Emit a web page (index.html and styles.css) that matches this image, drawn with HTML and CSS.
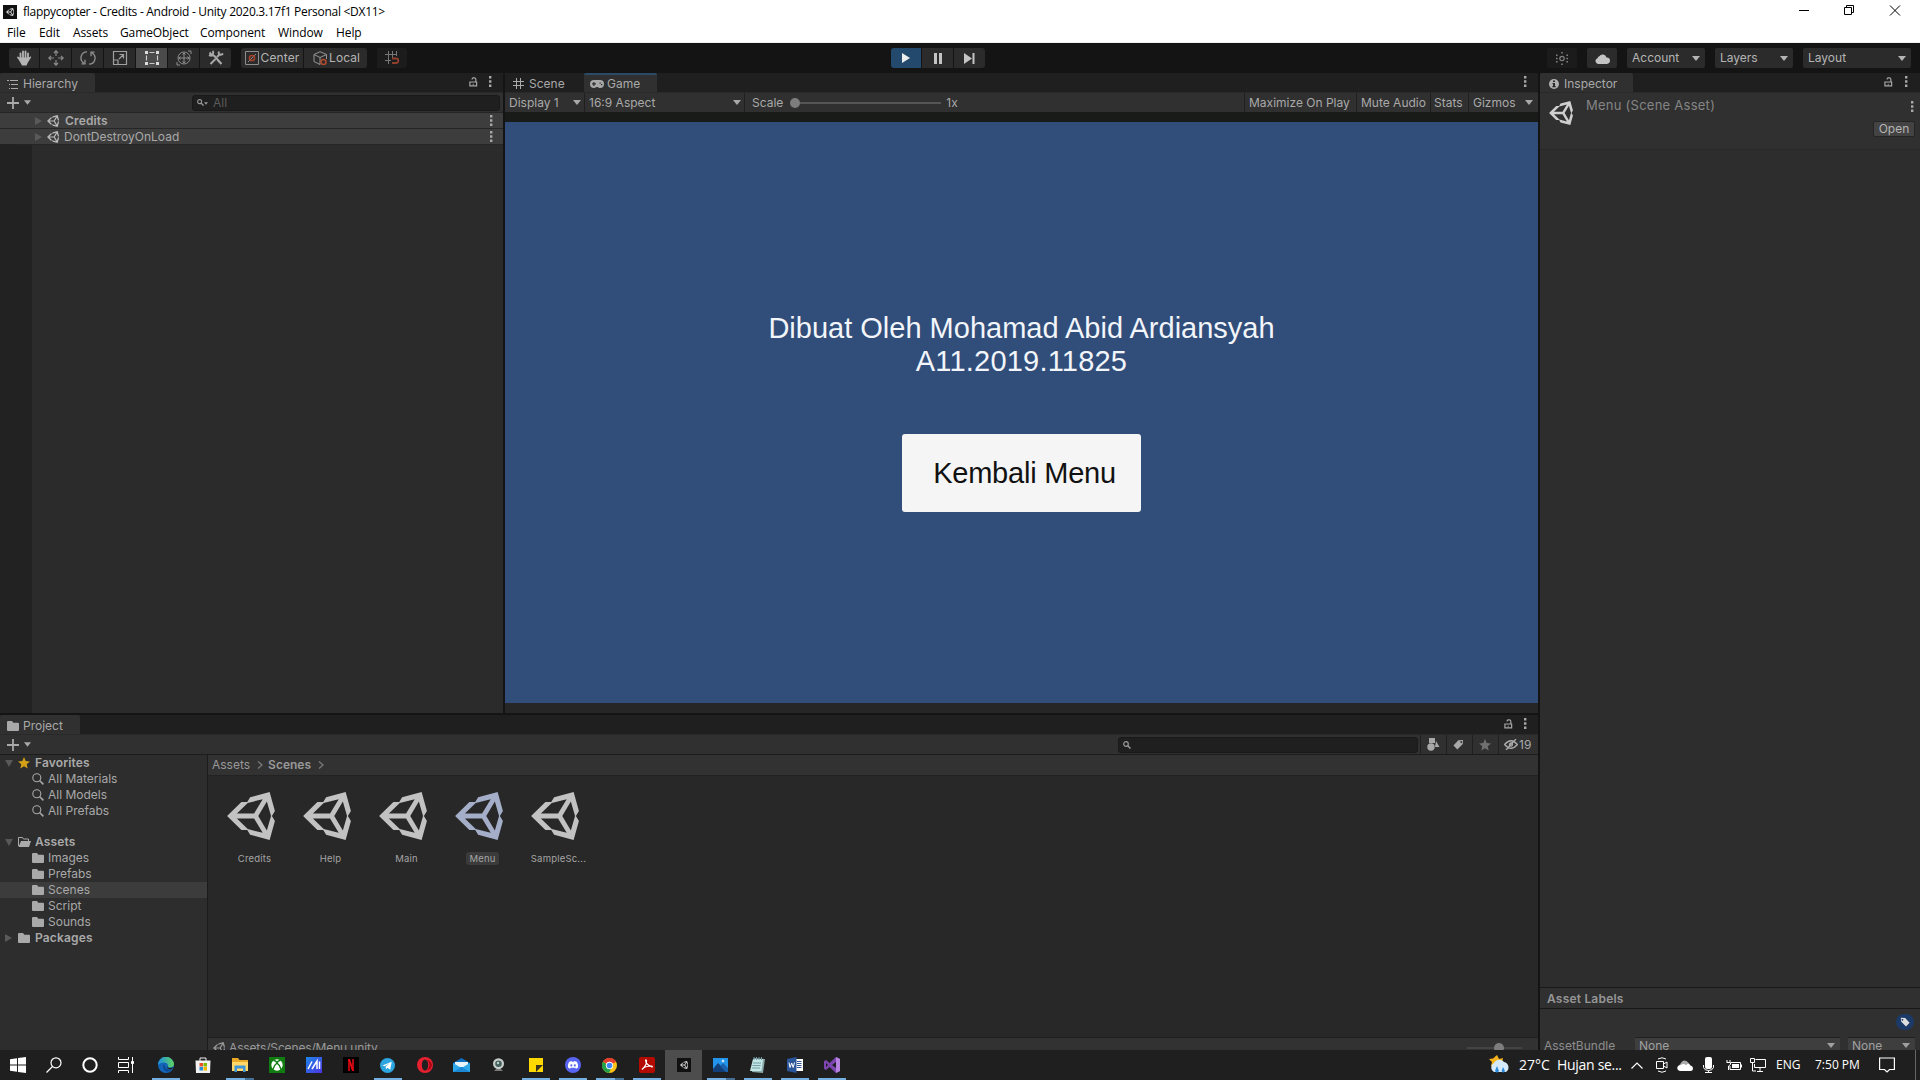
FILE: index.html
```html
<!DOCTYPE html>
<html lang="en">
<head>
<meta charset="utf-8">
<title>flappycopter - Credits - Android - Unity</title>
<link rel="stylesheet" href="styles.css">
</head>
<body>
<svg class="defs" aria-hidden="true">
  <symbol id="unity" viewBox="15 14 484 484"><path fill="currentColor" d="M498 206 445 15 248 66l-29 50-59 0L16 256l144 140h59l29 50 197 51 53-191-30-50zM224 124l151-37-87 145H115zm0 264L115 280h173l87 146zm193 14-87-146 87-146 42 146z"/></symbol>
  <symbol id="lock" viewBox="0 0 10 11"><path fill="none" stroke="currentColor" stroke-width="1.3" d="M1 5.5h7.5v4.300H1zM7.600 5.500V2.600Q7.600 1 6 1H4.800Q3.400 1 3.400 2.600M4.700 7.500v1"/></symbol>
  <symbol id="kebab" viewBox="0 0 4 12"><path fill="currentColor" d="M1 0h2.400v2.400H1zM1 4.300h2.400v2.400H1zM1 8.600h2.400V11H1z"/></symbol>
  <symbol id="tri" viewBox="0 0 8 5"><path fill="currentColor" d="M0 0h8L4 5z"/></symbol>
  <symbol id="plus" viewBox="0 0 12 12"><path stroke="currentColor" stroke-width="1.800" d="M6 0v12M0 6h12"/></symbol>
  <symbol id="folder" viewBox="0 0 12 10"><path fill="currentColor" d="M0 1.200Q0 0 1 0h4l1.300 1.800H11q1 0 1 1V9q0 1-1 1H1Q0 10 0 9z"/></symbol>
  <symbol id="search" viewBox="0 0 12 12"><circle cx="4.800" cy="4.800" r="4" fill="none" stroke="currentColor" stroke-width="1.100"/><path stroke="currentColor" stroke-width="1.600" d="m7.800 7.800 3.600 3.600"/></symbol>
  <symbol id="find" viewBox="0 0 8 8"><circle cx="3" cy="3" r="2.300" fill="none" stroke="currentColor" stroke-width="1.200"/><path stroke="currentColor" stroke-width="1.500" d="m4.700 4.700 2.800 2.800"/></symbol>
  <symbol id="chev" viewBox="0 0 6 8"><path fill="none" stroke="currentColor" stroke-width="1.400" d="m1 .5 4 3.500-4 3.500"/></symbol>
  <symbol id="star" viewBox="0 0 12 12"><path fill="currentColor" d="m6 0 1.700 4 4.300.4-3.300 2.800 1 4.300L6 9.200l-3.700 2.300 1-4.300L0 4.400 4.300 4z"/></symbol>
  <symbol id="tag" viewBox="0 0 12 12"><path fill="currentColor" fill-rule="evenodd" d="M5.800 1.300 11 1l-.3 4.500L4.800 11.500.5 7zM9 2.300a1 1 0 1 0 .1 0z"/></symbol>
</svg>

<header class="window">
  <div class="title">
    <span class="appicon"><svg width="8" height="8"><use href="#unity"/></svg></span>
    <span class="caption">flappycopter - Credits - Android - Unity 2020.3.17f1 Personal &lt;DX11&gt;</span>
    <svg class="winbtns" width="104" height="14" fill="none" stroke="#000"><path d="M1 7.500h10M46.500 4.500h7v7h-7zM48.500 4.500v-2h7v7h-2M92 2.500l10 10M102 2.500l-10 10"/></svg>
  </div>
  <nav class="menu"><span>File</span><span>Edit</span><span>Assets</span><span>GameObject</span><span>Component</span><span>Window</span><span>Help</span></nav>
</header>

<div class="toolbar">
  <div class="tools main">
    <b><svg width="16" height="16" viewBox="0 0 16 16"><path d="M4.500 9V3.300M7 8V1.500M9.500 8V1.500M12 9V3.300M2 7.500l3.300 4" stroke="#b5b5b5" stroke-width="1.800" stroke-linecap="round"/><path fill="#b5b5b5" d="M3.700 7.500h9.200l1.600-1.200.7 1-3.200 5-1.500 3.200H6L3 10z"/></svg></b>
    <b><svg width="16" height="16" viewBox="0 0 16 16" fill="none" stroke="#8a8a8a" stroke-width="1.200"><path d="M8 1v5M8 10v5M1 8h5M10 8h5M6 3l2-2.200L10 3M6 13l2 2.200 2-2.200M3 6 .8 8 3 10M13 6l2.200 2-2.200 2"/></svg></b>
    <b><svg width="16" height="16" viewBox="0 0 16 16" fill="none" stroke="#8f8f8f" stroke-width="1.300"><path d="M7 1.800A6 6 0 0 0 4 13M1.500 13.800H5v-4M9 14.200A6 6 0 0 0 12 3M14.500 2.200H11v4"/></svg></b>
    <b><svg width="16" height="16" viewBox="0 0 16 16" fill="none" stroke="#a0a0a0" stroke-width="1.200"><path d="M1.500 1.500h13v13h-13zM1.500 10h4.500v4.500M7 9l4.500-4.500M7.500 4.500h4v4"/></svg></b>
    <b class="on"><svg width="16" height="16" viewBox="0 0 16 16" fill="#ddd"><path d="M1 1h3v3H1zM12 1h3v3h-3zM1 12h3v3H1zM12 12h3v3h-3z"/><path stroke="#ccc" stroke-width="1.200" d="M5.500 2.500h5M5.500 13.500h5M2.500 5.500v5M13.500 5.500v5"/></svg></b>
    <b><svg width="16" height="16" viewBox="0 0 16 16" fill="none" stroke="#909090"><circle cx="8" cy="8" r="6"/><path d="M8 3v10M3 8h10M6.500 4.500 8 3l1.500 1.500M6.500 11.500 8 13l1.500-1.500M4.500 6.500 3 8l1.500 1.500M11.500 6.500 13 8l-1.500 1.500M12 1h3v3M1 12v3h3"/></svg></b>
    <b><svg width="16" height="16" viewBox="0 0 16 16" fill="none" stroke="#a8a8a8" stroke-width="2"><path d="m2.500 14 5-5M9 7l3-3M1.500 2.500 4 5l2.500 1L13.500 14M1 5q3 1.500 4-.5T4.500 1M11 1.500Q10 4 12 4.500t3-1M9.500 10l4 4"/></svg></b>
  </div>
  <div class="tools pivot">
    <b class="w62"><svg width="14" height="14" viewBox="0 0 14 14" fill="none" stroke="#8d8d8d"><path d="M.5.500h13v13H.5zM3 11l8-8"/><circle cx="7" cy="7" r="2.600" stroke="#a8432c" stroke-width="1.500"/></svg><span>Center</span></b>
    <b class="w63"><svg width="15" height="15" viewBox="0 0 15 15" fill="none" stroke="#969696"><path d="M7 .7 1 3.500v7l6 3M7 .7l6.500 2.800V8M1 3.500l6 3 6.500-3M7 6.500v7"/><circle cx="10.500" cy="11" r="2.500" stroke="#b04a2c" stroke-width="1.500"/></svg><span>Local</span></b>
  </div>
  <div class="tools snap"><b><svg width="15" height="14" viewBox="0 0 15 14" fill="none" stroke="#777"><path d="M0 3.500h12M0 9.500h6M3.500 0v13M7.500 0v7M11.500 0v5"/><path stroke="#8f3f2b" stroke-width="1.800" d="M7 7.500h4q2.300 0 2.300 2.200T11 12H7"/></svg></b></div>
  <div class="tools play">
    <b class="go"><svg width="8" height="12"><path fill="#eee" d="M0 1l8 5-8 5z"/></svg></b>
    <b><svg width="8" height="11"><path fill="#c4c4c4" d="M0 0h3v11H0zM5 0h3v11H5z"/></svg></b>
    <b><svg width="11" height="11"><path fill="#c4c4c4" d="M0 0l8 5.500L0 11zM8.500 0h2v11h-2z"/></svg></b>
  </div>
  <div class="tools right">
    <b class="dim"><svg width="14" height="13" viewBox="0 0 14 13" fill="none" stroke="#808080" stroke-width="1.200"><circle cx="7" cy="6.500" r="2.200"/><path stroke="none" fill="#808080" d="M6.200 0h1.600v1.600H6.200zM6.200 11.400h1.600V13H6.200zM1 2.500h1.600v1.600H1zM11.400 2.500H13v1.600h-1.600zM1 9h1.600v1.600H1zM11.400 9H13v1.600h-1.600zM1 5.700h1.600v1.600H1zM11.400 5.700H13v1.600h-1.600z"/></svg></b>
    <b><svg width="15" height="11" viewBox="0 0 15 11"><path fill="#c4c4c4" d="M3 11a3 3 0 0 1-.5-5.800 2.600 2.600 0 0 1 1.800-2A4 4 0 0 1 11.500 4.500 3.200 3.200 0 0 1 12 11z"/></svg></b>
    <b class="dd"><span>Account</span><svg width="8" height="5"><use href="#tri"/></svg></b>
    <b class="dd"><span>Layers</span><svg width="8" height="5"><use href="#tri"/></svg></b>
    <b class="dd wide"><span>Layout</span><svg width="8" height="5"><use href="#tri"/></svg></b>
  </div>
</div>

<main class="editor">
  <div class="left">
    <div class="upper">
      <section class="hierarchy">
        <div class="tabs"><div class="tab th"><svg width="11" height="10" viewBox="0 0 11 10" stroke="#aaa"><path d="M0 1.500h2M3 1.500h8M2 5.500h1M4 5.500h7M2 9.500h1M4 9.500h7"/></svg><span>Hierarchy</span></div>
          <div class="tabend"><svg width="9" height="10"><use href="#lock"/></svg><svg width="4" height="12"><use href="#kebab"/></svg></div></div>
        <div class="bar"><svg class="plus" width="12" height="12"><use href="#plus"/></svg><svg width="7" height="5"><use href="#tri"/></svg>
          <div class="field hsearch"><svg width="7" height="7"><use href="#find"/></svg><svg class="mini" width="4" height="3"><use href="#tri"/></svg><span>All</span></div></div>
        <div class="hrow"><i class="rt"></i><svg class="u" width="12" height="12"><use href="#unity"/></svg><strong>Credits</strong><svg class="k" width="4" height="12"><use href="#kebab"/></svg></div>
        <div class="hrow second"><i class="rt"></i><svg class="u" width="12" height="12"><use href="#unity"/></svg><span>DontDestroyOnLoad</span><svg class="k" width="4" height="12"><use href="#kebab"/></svg></div>
        <div class="hbody"></div>
      </section>
      <section class="game">
        <div class="tabs"><div class="tab ts"><svg width="11" height="11" viewBox="0 0 11 11" stroke="#aaa"><path d="M3.500 0v11M7.500 0v11M0 3.500h11M0 7.500h11"/></svg><span>Scene</span></div>
          <div class="tab tg"><svg width="14" height="8" viewBox="0 0 14 8"><path fill="#a9a9a9" fill-rule="evenodd" d="M4 0h6a4 4 0 0 1 0 8Q8.500 8 7.700 7H6.300Q5.500 8 4 8a4 4 0 0 1 0-8zM3.300 2v1.300H2v1.200h1.300V6h1.200V4.500H6V3.300H4.500V2zM9.500 2.500h1.300v1.300H9.500zM11 4h1.300v1.300H11z"/></svg><span>Game</span></div>
          <div class="tabend"><svg width="4" height="12"><use href="#kebab"/></svg></div></div>
        <div class="bar gbar">
          <div class="cell c1"><span>Display 1</span><svg width="8" height="5"><use href="#tri"/></svg></div>
          <div class="cell c2"><span>16:9 Aspect</span><svg width="8" height="5"><use href="#tri"/></svg></div>
          <div class="cell c3"><span>Scale</span><div class="slider"><i></i></div><span>1x</span></div>
          <div class="cell c4">Maximize On Play</div><div class="cell c5">Mute Audio</div><div class="cell c6">Stats</div><div class="cell c7"><span>Gizmos</span><svg width="8" height="5"><use href="#tri"/></svg></div>
        </div>
        <div class="view">
          <p>Dibuat Oleh Mohamad Abid Ardiansyah<br><span class="nim">A11.2019.11825</span></p>
          <button>Kembali Menu</button>
        </div>
      </section>
    </div>
    <section class="project">
      <div class="tabs"><div class="tab tp"><svg width="12" height="10"><use href="#folder"/></svg><span>Project</span></div>
        <div class="tabend"><svg width="9" height="10"><use href="#lock"/></svg><svg width="4" height="12"><use href="#kebab"/></svg></div></div>
      <div class="bar"><svg class="plus" width="12" height="12"><use href="#plus"/></svg><svg width="7" height="5"><use href="#tri"/></svg>
        <div class="field psearch"><svg width="8" height="8"><use href="#find"/></svg></div>
        <div class="pb"><svg width="13" height="13" viewBox="0 0 13 13" fill="#a8a8a8"><path d="M2 0h6v5H2zM9 3l3.500 6H8z"/><circle cx="4" cy="9" r="3.700"/></svg></div>
        <div class="pb"><svg width="11" height="11"><use href="#tag"/></svg></div>
        <div class="pb st"><svg width="12" height="12"><use href="#star"/></svg></div>
        <div class="pb last"><svg width="14" height="11" viewBox="0 0 14 11" fill="none" stroke="#a8a8a8" stroke-width="1.300"><path d="M.6 5.500Q7-2 13.400 5.500 7 13 .6 5.500zM2 11 12 0M4.500 8 9.500 2.500"/><circle cx="7" cy="5.500" r="1.500"/></svg><span>19</span></div>
      </div>
      <div class="pbody">
        <div class="tree">
          <div class="row"><i class="dt"></i><svg class="fav" width="12" height="12"><use href="#star"/></svg><strong>Favorites</strong></div>
          <div class="row sub"><svg width="12" height="12"><use href="#search"/></svg><span>All Materials</span></div>
          <div class="row sub"><svg width="12" height="12"><use href="#search"/></svg><span>All Models</span></div>
          <div class="row sub"><svg width="12" height="12"><use href="#search"/></svg><span>All Prefabs</span></div>
          <div class="row gap"><i class="dt"></i><svg class="open" width="13" height="10" viewBox="0 0 13 10"><path fill="none" stroke="#aaa" d="M.5 9V.500h4l1 1.500h5v2"/><path fill="#aaa" d="M3 4h10l-2 6H.5z"/></svg><strong>Assets</strong></div>
          <div class="row sub"><svg width="12" height="10"><use href="#folder"/></svg><span>Images</span></div>
          <div class="row sub"><svg width="12" height="10"><use href="#folder"/></svg><span>Prefabs</span></div>
          <div class="row sub sel"><svg width="12" height="10"><use href="#folder"/></svg><span>Scenes</span></div>
          <div class="row sub"><svg width="12" height="10"><use href="#folder"/></svg><span>Script</span></div>
          <div class="row sub"><svg width="12" height="10"><use href="#folder"/></svg><span>Sounds</span></div>
          <div class="row"><i class="rt"></i><svg width="12" height="10"><use href="#folder"/></svg><strong>Packages</strong></div>
        </div>
        <div class="files">
          <div class="crumbs"><span>Assets</span><svg width="6" height="8"><use href="#chev"/></svg><strong>Scenes</strong><svg width="6" height="8"><use href="#chev"/></svg></div>
          <div class="grid">
            <div class="file"><svg width="48" height="48"><use href="#unity"/></svg><span>Credits</span></div>
            <div class="file"><svg width="48" height="48"><use href="#unity"/></svg><span>Help</span></div>
            <div class="file"><svg width="48" height="48"><use href="#unity"/></svg><span>Main</span></div>
            <div class="file picked"><svg width="48" height="48"><use href="#unity"/></svg><span>Menu</span></div>
            <div class="file"><svg width="48" height="48"><use href="#unity"/></svg><span>SampleSc...</span></div>
          </div>
          <div class="path"><svg width="12" height="12"><use href="#unity"/></svg><span>Assets/Scenes/Menu.unity</span><div class="zoomer"><i></i></div></div>
        </div>
      </div>
    </section>
  </div>
  <aside class="inspector">
    <div class="tabs"><div class="tab ti"><svg width="10" height="10" viewBox="0 0 10 10"><circle cx="5" cy="5" r="5" fill="#b0b0b0"/><path fill="#2b2b2b" d="M4 1.500h2v1.600H4zM3.500 4H6v3h.7v1.200H3.400V7H4V5h-.5z"/></svg><span>Inspector</span></div>
      <div class="tabend"><svg width="9" height="10"><use href="#lock"/></svg><svg width="4" height="12"><use href="#kebab"/></svg></div></div>
    <div class="ihead"><svg class="iu" width="24" height="24"><use href="#unity"/></svg><span class="iname">Menu (Scene Asset)</span><div class="iside"><svg width="4" height="12"><use href="#kebab"/></svg><button>Open</button></div></div>
    <div class="ibody"></div>
    <div class="labels">Asset Labels</div>
    <div class="tagrow"><i><svg width="10" height="10"><use href="#tag"/></svg></i></div>
    <div class="bundle"><span>AssetBundle</span><div class="sel1">None<svg width="8" height="5"><use href="#tri"/></svg></div><div class="sel2">None<svg width="8" height="5"><use href="#tri"/></svg></div></div>
  </aside>
</main>

<footer class="taskbar">
  <div class="t n"><svg width="16" height="16" viewBox="0 0 16 16"><path fill="#fff" d="M0 2.200 7 1.200v6.300H0zM8 1l8-1v7.500H8zM0 8.500h7v6.300l-7-1zM8 8.500h8V16l-8-1.100z"/></svg></div>
  <div class="t n"><svg width="16" height="16" viewBox="0 0 16 16" fill="none" stroke="#fff" stroke-width="1.200"><circle cx="10" cy="5.800" r="5"/><path d="M6.500 9.500.5 15.500"/></svg></div>
  <div class="t n"><svg width="16" height="16" viewBox="0 0 16 16"><circle cx="8" cy="8" r="6.700" fill="none" stroke="#fff" stroke-width="2"/></svg></div>
  <div class="t tv"><svg width="16" height="16" viewBox="0 0 16 16" fill="none" stroke="#fff"><path d="M.5 0v2.500h10V0M.5 5.500h10v5H.5zM.5 16v-2.500h10V16M14.500 0v16"/><path fill="#fff" d="M13.500 4.500h2v2h-2z"/></svg></div>
  <div class="t on"><svg width="16" height="16" viewBox="0 0 16 16"><defs><linearGradient id="eg"><stop stop-color="#1b8fe0"/><stop offset="1" stop-color="#5fd35f"/></linearGradient></defs><circle cx="8" cy="8" r="8" fill="#1465b8"/><path fill="url(#eg)" d="M0 8a8 8 0 0 1 16-.5Q15.500 11 11 10.500 9.500 10 10 8.500 10 6 6.500 5.500 2 5 0 8z"/><path fill="#0c4590" d="M6 7q-2 3 1 6.500 3 2 6-.5-5 0-6-3z"/><path fill="#202020" d="M9.800 8.500q-1 2 2 2.500 2.500 0 3.500-1-1 2.500-3 2.600Q8 12 9.800 8.500z"/></svg></div>
  <div class="t"><svg width="16" height="16" viewBox="0 0 16 16"><path fill="none" stroke="#eee" d="M5 4V1h6v3"/><path fill="#f2f2f2" d="M.5 3.500h15L15 16H1z"/><path fill="#e8512e" d="M4.500 6H8v3.500H4.500z"/><path fill="#7fba00" d="M8.500 6H12v3.500H8.500z"/><path fill="#2a8fd8" d="M4.500 10H8v3.500H4.500z"/><path fill="#f5b400" d="M8.500 10H12v3.500H8.500z"/></svg></div>
  <div class="t on two"><svg width="16" height="16" viewBox="0 0 16 16"><path fill="#e9a825" d="M0 1h6l1.500 2H16v11H0z"/><path fill="#ffd869" d="M0 5h16v9H0z"/><path fill="#3e95d8" d="M2.500 15V8.500h11V15H11v-3.500H5V15z"/></svg></div>
  <div class="t"><svg width="16" height="16" viewBox="0 0 16 16"><path fill="#107c10" d="M0 0h16v16H0z"/><circle cx="8" cy="8" r="5.700" fill="#fff"/><path fill="none" stroke="#107c10" stroke-width="1.500" d="M4 12.500Q5 8 8 6q3 2 4 6.500M4.500 3.300Q7 4 8 5.700 9 4 11.500 3.300"/></svg></div>
  <div class="t"><svg width="16" height="16" viewBox="0 0 16 16"><defs><linearGradient id="mg" x2="1" y2="1"><stop stop-color="#1c86e8"/><stop offset="1" stop-color="#4c35e0"/></linearGradient></defs><path fill="url(#mg)" d="M0 0h16v16H0z"/><path fill="none" stroke="#fff" stroke-width="1.500" d="M2 12 6 4.500M6 12l5-8v8M13.500 4.500V12"/></svg></div>
  <div class="t"><svg width="16" height="16" viewBox="0 0 16 16"><path d="M0 0h16v16H0z"/><path fill="#b20710" d="M5 2h2v12H5zM9 2h2v12H9z"/><path fill="#e50914" d="M5 2h2l4 12H9z"/></svg></div>
  <div class="t on"><svg width="15" height="15" viewBox="0 0 16 16"><circle cx="8" cy="8" r="8" fill="#2ca5e0"/><path fill="#fff" d="m2.500 8 10-4-1.600 8.500-3-2-1.500 1.500-.4-2.800 4-3.700-5 3.300z"/></svg></div>
  <div class="t"><svg width="16" height="16" viewBox="0 0 16 16"><ellipse cx="8" cy="8" rx="8" ry="8" fill="#e8202f"/><ellipse cx="8" cy="8" rx="3.200" ry="5.500" fill="#202020"/><path fill="#a70014" d="M10 2.500q5 5 0 11 4-1 5-5.500-.7-4-5-5.500z"/></svg></div>
  <div class="t"><svg width="17" height="14" viewBox="0 0 17 14"><path fill="#0f6fc0" d="M0 5 8.500 0 17 5v9H0z"/><path fill="#e8f4fc" d="M2 4h13v5H2z"/><path fill="#2ba7ea" d="m0 5 8.500 5L17 5v9H0z"/><path fill="#1b88d6" d="m0 14 8.500-5 8.500 5z"/></svg></div>
  <div class="t"><svg width="13" height="14" viewBox="0 0 13 14"><path fill="#777" d="m2 13 3-3h3l3 3z"/><circle cx="6.500" cy="5.700" r="5.500" fill="#c9cfcd"/><circle cx="6.500" cy="5.700" r="3.300" fill="#48605d"/><circle cx="6" cy="5" r="1.200" fill="#b7d3ce"/></svg></div>
  <div class="t on"><svg width="14" height="14"><path fill="#ffd800" d="M0 0h14v14H0z"/><path fill="#3a3320" d="M7 14V7h7z"/></svg></div>
  <div class="t on"><svg width="16" height="16" viewBox="0 0 16 16"><circle cx="8" cy="8" r="8" fill="#5865f2"/><path fill="#fff" fill-rule="evenodd" d="m4 5 2.500-1 .5.700h2l.5-.7L12 5q1.300 2.500 1 5.500l-2 1.200-.8-1H5.800l-.8 1-2-1.200Q2.700 7.500 4 5zm2.300 2.200a1 1.200 0 1 0 .1 0zm3.500 0a1 1.200 0 1 0 .1 0z"/></svg></div>
  <div class="t on two"><svg width="15" height="15" viewBox="0 0 16 16"><circle cx="8" cy="8" r="8" fill="#fbc116"/><path fill="#e33b2e" d="M8 8 1 4a8 8 0 0 1 14 0z"/><path fill="#249f4a" d="M1 4a8 8 0 0 0 6.500 12L10 10z"/><circle cx="8" cy="8" r="3.900" fill="#fff"/><circle cx="8" cy="8" r="3" fill="#4285f4"/></svg></div>
  <div class="t on"><svg width="16" height="16" viewBox="0 0 16 16"><rect width="16" height="16" rx="2" fill="#b30b00"/><path fill="none" stroke="#fff" stroke-width="1.200" d="M3 12.500Q8 8 7.500 3.500q-.7-1.500-1 0 .5 4 6.500 6.500 1-1-1-1-6 0-9 3.500"/></svg></div>
  <div class="t active"><span class="uicon"><svg width="8" height="8"><use href="#unity"/></svg></span></div>
  <div class="t on two"><svg width="15" height="14" viewBox="0 0 15 14"><path fill="#2294ea" d="M0 0h15v14H0z"/><path fill="#123f78" d="m0 11 5-6 9 9H0z"/><path fill="#1a62ad" d="m7 8 3-3 5 5v4h-2z"/><path fill="#fff" d="m10 1 .6 1.400L12 3l-1.400.6L10 5l-.6-1.400L8 3l1.400-.6z"/></svg></div>
  <div class="t on"><svg width="15" height="16" viewBox="0 0 15 16"><path fill="#8ba9ab" d="m4 1 11 1-2 14-11-1z"/><path fill="#c5e6e7" d="M3 2h10l-1.500 12H0z"/><path stroke="#719ca1" d="M4 0v3M6.500 0v3M9 0v3M11.500 0v3M3 6h8M2.500 8.500h8M2 11h8"/></svg></div>
  <div class="t on"><svg width="16" height="16" viewBox="0 0 16 16"><path fill="#fff" d="M8 2h8v12H8z"/><path stroke="#2b579a" d="M10 4.500h4.500M10 6.500h4.500M10 8.500h4.500M10 10.500h4.500"/><path fill="#2b579a" d="m0 2 9.500-2v16L0 14z"/><path fill="none" stroke="#fff" d="m2 5.500 1 5 1.700-4.500 1.500 4.500 1.300-5"/></svg></div>
  <div class="t on"><svg width="16" height="16" viewBox="0 0 16 16"><path fill="#7c45b0" fill-rule="evenodd" d="m12 0 4 2v12l-4 2-6.500-6L2 13l-2-1.300V4.300L2 3l3.500 3zM12 5 8 8l4 3zM2 6v4l2-2z"/><path fill="#b583df" d="m12 0 4 2v12l-4 2z"/></svg></div>

  <div class="tray">
    <svg class="wx" width="23" height="22" viewBox="0 0 23 22"><path fill="#f5b21b" d="m9 1 2 4 4-1-1 5-5 4-6-1 1-4-3-3 4-.5z"/><path fill="#d7eafa" d="M6 18a5 5 0 0 1 0-9 6 6 0 0 1 10-1 5.500 5.500 0 0 1 2 10z"/><path fill="#2e8ada" d="m9 12 2 5q-2 3-4 0zM15 13l2 4q-1.500 3-3.500 0z"/></svg>
    <span class="temp">27°C</span><span class="rain">Hujan se...</span>
    <svg class="up" width="12" height="7" fill="none" stroke="#fff" stroke-width="1.200"><path d="m.5 6.500 5.500-5.500 5.500 5.500"/></svg>
    <svg class="meet" width="12" height="16" viewBox="0 0 12 16" fill="none" stroke="#fff"><path d="M.5 4.500h7v7h-7zM7.500 7 11 5v6L7.500 9M2 2q4-2.500 8 0M2 14q4 2.500 8 0"/></svg>
    <svg class="od" width="16" height="11" viewBox="0 0 16 11"><path fill="#aaa" d="M1 7 5 1.500Q9-1.500 12.500 4z"/><path fill="#fff" d="M3 11Q0 10 .3 7.500.8 5 4 5q2-2 5 0 3-2.500 4.500.5Q16 6 16 8.500q0 2-2 2.500z"/></svg>
    <svg class="mic" width="11" height="16" viewBox="0 0 11 16"><rect x="2" width="7" height="12" rx="2" fill="#fff"/><path fill="none" stroke="#fff" d="M.5 8v2.500q1 3 5 3t5-3V8M5.500 13.500V16M2 15.500h7"/></svg>
    <svg class="bat" width="16" height="12" viewBox="0 0 16 12"><path fill="none" stroke="#fff" d="M5 3.500h9.500v7H4V7M15.500 5.500v3M1 1v2M4 1v2M.5 3.500h4v2L2.500 7v4"/><path fill="#fff" d="M6 5h7v4H6z"/></svg>
    <svg class="mon" width="16" height="14" viewBox="0 0 16 14" fill="none" stroke="#fff"><path d="M5.500 1.500h10v8H4.500V6M10 9.500v4M7 13.500h6M.5.500h4v4h-4zM2.500 4.500V13H6"/></svg>
    <span class="eng">ENG</span><span class="clock">7:50 PM</span>
    <svg class="note" width="16" height="17" viewBox="0 0 16 17" fill="none" stroke="#fff" stroke-width="1.200"><path d="M.6 1h14.800v11.500H10.500L8 15l-2.500-2.500H.6z"/></svg>
    <i class="peek"></i>
  </div>
</footer>
</body>
</html>
```
FILE: styles.css
```css
* { box-sizing: border-box; }
body { margin: 0; width: 1920px; height: 1080px; overflow: hidden; display: flex; flex-direction: column; background: #141414; color: #a9a9a9; font: 12px/16px Inter, "Liberation Sans", sans-serif; }
svg { display: block; flex: none; }
span, strong { white-space: nowrap; }
strong { font-weight: 600; letter-spacing: .15px; }
.defs { position: absolute; width: 0; height: 0; }

.window { height: 43px; background: #fff; color: #000; font: 12px/20px "Open Sans", "Noto Sans", sans-serif; border-bottom: 1px solid #f0f0f0; }
.title { height: 23px; display: flex; align-items: center; padding-left: 3px; }
.appicon, .uicon { width: 14px; height: 14px; background: #111; color: #ddd; display: grid; place-items: center; }
.caption { margin-left: 6px; letter-spacing: -.285px; }
.winbtns { margin: -3px 18px 0 auto; }
.menu { height: 20px; display: grid; grid-template-columns: 32px 34px 47px 80px 78px 58px 60px; padding-left: 7px; line-height: 19px; letter-spacing: -.1px; }

.toolbar { height: 30px; display: flex; align-items: center; padding-left: 9px; color: #b4b4b4; }
.tools { display: flex; gap: 1px; height: 20px; }
.tools b { width: 31px; height: 20px; background: #2b2b2b; display: flex; align-items: center; justify-content: center; font-weight: 400; }
.tools b:first-child { border-radius: 3px 0 0 3px; }
.tools b:last-child { border-radius: 0 3px 3px 0; }
.main b:first-child { width: 30px; }
.tools b.on { background: #4b4b4b; }
.tools .w62 { width: 62px; gap: 2px; }
.tools .w63 { width: 63px; gap: 1px; justify-content: flex-start; padding-left: 9px; }
.pivot { margin-left: 10px; }
.pivot span { letter-spacing: .1px; }
.snap { margin-left: 10px; }
.snap b { width: 30px; background: #1c1c1c; }
.play { margin-left: 484px; }
.tools .go { background: #234a6d; width: 30px; }
.right { margin-left: auto; margin-right: 9px; gap: 10px; }
.right b, .right b:first-child, .right b:last-child { width: 30px; border-radius: 2px; }
.right .dim { background: #1b1b1b; }
.right b.dd { width: 78px; justify-content: space-between; padding: 0 5px; }
.right b.dd.wide { width: 108px; }

.editor { height: 977px; display: flex; gap: 2px; }
.left { width: 1538px; display: flex; flex-direction: column; gap: 2px; }
.upper { height: 640px; display: flex; gap: 2px; }
.hierarchy { width: 503px; display: flex; flex-direction: column; }
.game { width: 1033px; display: flex; flex-direction: column; }
.tabs { height: 19px; background: #1f1f1f; display: flex; color: #a9a9a9; }
.tab { height: 19px; display: flex; align-items: center; padding-top: 2px; }
.th, .tg, .tp, .ti { background: #303030; border-radius: 2px 2px 0 0; }
.th { width: 95px; padding-left: 7px; gap: 5px; }
.ts { width: 79px; padding-left: 8px; gap: 5px; }
.tg { width: 73px; padding: 0 0 0 6px; gap: 3px; border-top: 2px solid #2b4a66; }
.tp { width: 80px; padding-left: 7px; gap: 4px; }
.ti { width: 93px; padding-left: 9px; gap: 5px; }
.tabend { margin-left: auto; display: flex; align-items: center; gap: 10px; padding: 0 11px 1px 0; }
.inspector .tabend { padding-right: 12px; gap: 11px; }
.bar { height: 20px; flex: none; background: #303030; display: flex; align-items: center; border-top: 1px solid #292929; }
.bar .plus { margin: 0 5px 0 7px; }
.field { background: #1f1f1f; border: 1px solid #191919; border-radius: 3px; display: flex; align-items: center; color: #999; }
.hsearch { width: 308px; height: 16px; margin-left: 161px; padding-left: 4px; }
.hsearch span { color: #5a5a5a; margin-left: 5px; }
.mini { margin-top: 2px; }
.hrow { height: 16px; background: #3d3d3d; border-top: 1px solid #262626; display: flex; align-items: center; padding-left: 35px; }
.rt { border: 4px solid transparent; border-left: 7px solid #5a5a5a; border-right: 0; }
.hrow .u { margin: 0 6px 0 5px; color: #bbb; }
.second .u { margin-right: 5px; }
.k { margin-left: auto; margin-right: 10px; }
.hbody { flex: 1; background: #2b2b2b; border-left: 32px solid #222; border-top: 1px solid #262626; }

.cell { height: 19px; display: flex; align-items: center; border-right: 1px solid #1f1f1f; padding-left: 4px; }
.cell svg { margin-left: auto; }
.c1 { width: 80px; padding-right: 3px; }
.c2 { width: 160px; padding-right: 3px; }
.c3 { width: 500px; padding-left: 7px; }
.slider { width: 146px; height: 2px; background: #555; margin: 0 5px 0 12px; display: flex; align-items: center; }
.slider i, .zoomer i { width: 10px; height: 10px; border-radius: 50%; background: #7d7d7d; }
.slider i { margin-left: -5px; }
.c4 { width: 112px; }
.c5 { width: 74px; }
.c6 { width: 38px; padding-left: 3px; }
.c7 { width: 69px; border: 0; padding-right: 5px; }
.view { height: 601px; background: #314d79; border-top: 10px solid #191b18; border-bottom: 10px solid #262626; display: flex; flex-direction: column; align-items: center; padding-top: 190px; font: 29px/33px "Liberation Sans", Arial, sans-serif; color: #f2f5fa; }
.view p { margin: 0; text-align: center; }
.nim { letter-spacing: .2px; }
.view button { margin-top: 56px; width: 239px; height: 78px; border: 0; border-radius: 3px; background: #f5f5f5; color: #111; font: inherit; letter-spacing: -.22px; padding: 0 0 0 6px; }

.project { height: 335px; display: flex; flex-direction: column; }
.psearch { width: 300px; height: 16px; margin-left: 1087px; padding-left: 4px; margin-right: 2px; }
.pb { width: 26px; height: 19px; border-left: 1px solid #202020; display: flex; align-items: center; padding-left: 6px; }
.pb.st { color: #707070; }
.pb.last { gap: 1px; padding-left: 5px; }
.pbody { height: 296px; display: flex; border-top: 1px solid #1c1c1c; }
.tree { width: 208px; background: #2d2d2d; border-right: 1px solid #1b1b1b; }
.row { height: 16px; display: flex; align-items: center; padding-left: 5px; }
.row svg { margin-right: 5px; }
.row .rt { margin-right: 6px; }
.row .fav { color: #d4a017; }
.row .open { margin-right: 4px; }
.dt { border: 4px solid transparent; border-top: 7px solid #585858; border-bottom: 0; margin-right: 5px; }
.row.sub { padding-left: 32px; }
.row.sub svg { margin-right: 4px; }
.row.gap { margin-top: 15px; }
.sel { background: #3c3c3c; }
.files { width: 1330px; background: #282828; }
.crumbs { height: 21px; background: #323232; border-bottom: 1px solid #222; display: flex; align-items: center; padding-left: 4px; color: #999; }
.crumbs strong { letter-spacing: 0; }
.crumbs svg { margin: 0 5px 0 7px; color: #777; }
.grid { height: 261px; display: flex; padding: 16px 0 0 9px; }
.file { width: 76px; display: flex; flex-direction: column; align-items: center; font-size: 9.500px; color: #a5a5a5; }
.file svg { color: #c2c2c2; margin-right: 8px; }
.file span { margin-top: 12px; height: 13px; line-height: 13px; padding: 0 3px; margin-right: 1px; letter-spacing: .2px; }
.picked svg { color: #a4aec8; }
.picked span { background: #3b3b3b; border-radius: 3px; }
.path { height: 21px; background: #323232; border-top: 1px solid #1f1f1f; display: flex; align-items: center; padding: 0 16px 0 5px; gap: 4px; color: #999; }
.path span { letter-spacing: -.15px; }
.zoomer { margin-left: auto; width: 55px; height: 2px; background: #444; display: flex; align-items: center; justify-content: center; padding-left: 8px; }

.inspector { width: 380px; background: #2b2b2b; display: flex; flex-direction: column; overflow: hidden; }
.ihead { height: 58px; background: #303030; border-top: 1px solid #292929; border-bottom: 1px solid #292929; display: flex; padding: 8px 5px 0 9px; }
.iu { color: #cfcfcf; }
.iname { margin-left: 13px; margin-top: -4px; font-size: 13px; color: #858585; letter-spacing: .25px; }
.iside { margin-left: auto; display: flex; flex-direction: column; align-items: flex-end; gap: 8px; }
.iside svg { margin-right: 1px; }
.ihead button { width: 42px; height: 16px; border: 1px solid #252525; border-radius: 2px; background: #434343; color: #b5b5b5; font: inherit; line-height: 14px; padding: 0; }
.ibody { flex: 1; background: #2d2d2d; }
.labels { height: 22px; border: solid #191919; border-width: 1px 0; background: #303030; padding: 3px 0 0 7px; font-weight: 600; color: #969696; letter-spacing: .2px; }
.tagrow { height: 28px; background: #303030; padding: 5px 6px 0 0; display: flex; justify-content: flex-end; }
.tagrow i { width: 18px; height: 16px; border-radius: 8px; background: #1c3a68; color: #ddd; display: grid; place-items: center; }
.tagrow svg { transform: scaleX(-1); }
.bundle { height: 13px; background: #303030; display: flex; color: #8d8d8d; padding-left: 4px; }
.bundle > span { width: 91px; padding-top: 1px; }
.bundle div { height: 18px; background: #3e3e3e; border-top: 1px solid #202020; display: flex; align-items: center; justify-content: space-between; padding: 0 5px 2px 4px; flex: none; color: #a0a0a0; }
.sel1 { width: 205px; margin-right: 8px; }
.sel2 { width: 67px; }

.taskbar { height: 30px; background: #1f1f1f; display: flex; color: #fff; }
.t { width: 37px; height: 30px; display: grid; place-items: center; }
.t.n { width: 36px; }
.t.tv { width: 39px; padding-right: 3px; }
.t.on { background: linear-gradient(#76b0e0, #76b0e0) 50% 100% / 28px 2px no-repeat; }
.t.on.two { background: linear-gradient(90deg, #76b0e0 19px, #456f94 19px) 50% 100% / 28px 2px no-repeat; }
.t.active { background: #4d4d4d; }
.tray { margin-left: auto; display: flex; align-items: center; font: 14px/20px "Open Sans", "Noto Sans", sans-serif; }
.temp { margin-left: 8px; width: 38px; }
.rain { width: 74px; letter-spacing: -.3px; }
.up { margin-right: 13px; }
.meet { margin-right: 9px; }
.od { margin-right: 10px; }
.mic { margin-right: 12px; }
.bat { margin-right: 8px; }
.mon { margin-right: 10px; }
.eng { width: 39px; font-size: 12px; }
.clock { width: 64px; font-size: 12px; }
.note { margin-right: 20px; }
.peek { width: 5px; height: 30px; border-left: 1px solid #666; }
```
